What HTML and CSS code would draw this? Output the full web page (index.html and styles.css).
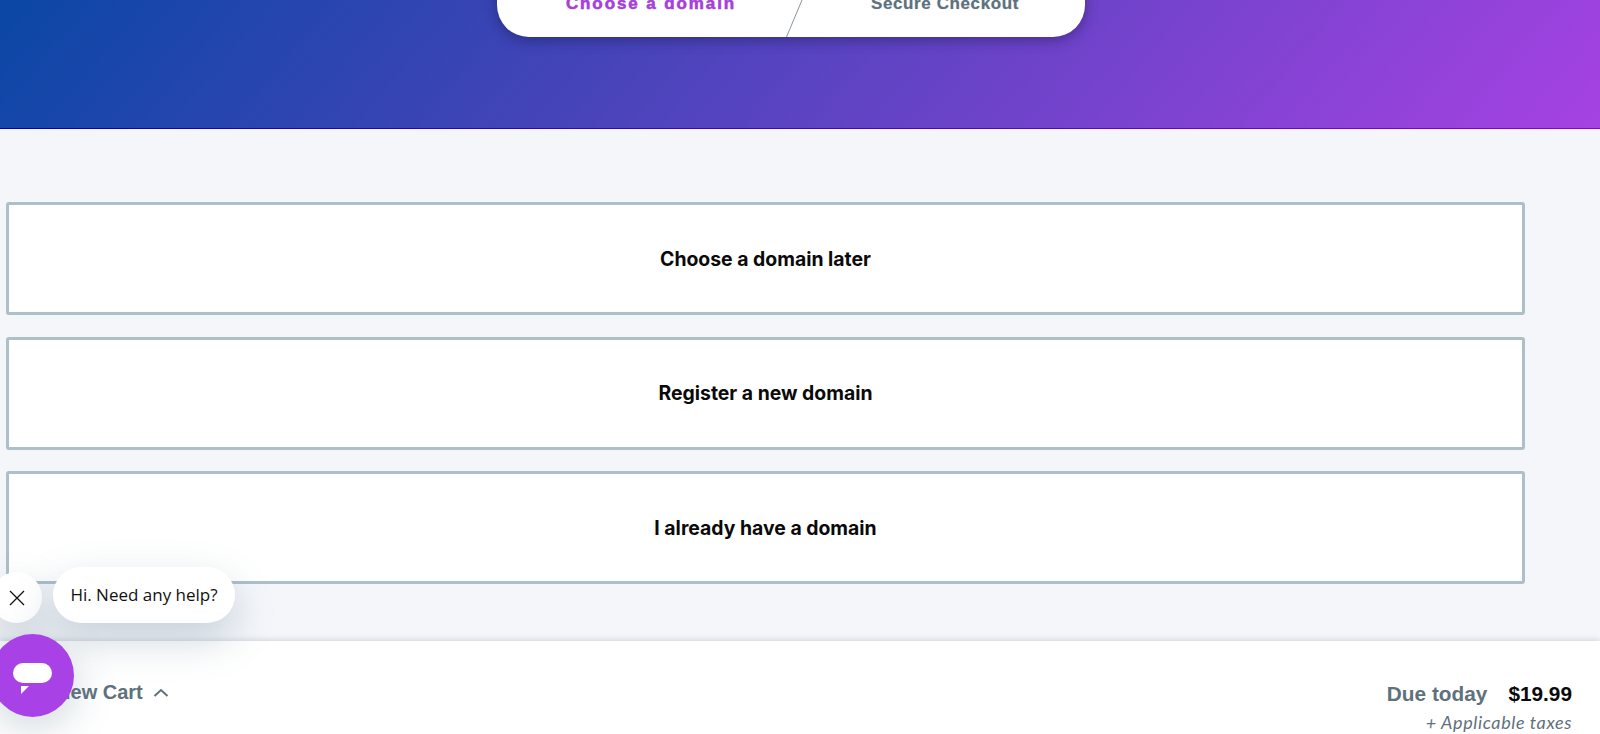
FILE: index.html

```html
<!DOCTYPE html>
<html lang="en">
<head>
  <meta charset="UTF-8" />
  <meta name="viewport" content="width=device-width, initial-scale=1.0"/>
  <title>Choose a domain</title>
  <link rel="stylesheet" href="styles.css">
</head>
<body>
  <header class="hero">
    <div class="steps">
      <div class="step step-active">Choose a domain</div>
      <div class="step">Secure Checkout</div>
      <svg class="step-arrow" width="18" height="42" viewBox="0 0 18 42">
        <path d="M13 0 L17 5 L1.500 42" fill="none" stroke="#8a949c" stroke-width="1"/>
      </svg>
    </div>
  </header>

  <main class="options">
    <button class="option">Choose a domain later</button>
    <button class="option">Register a new domain</button>
    <button class="option">I already have a domain</button>
  </main>

  <footer class="cart-bar">
    <div class="cart-toggle">
      <span>View Cart</span>
      <svg width="16" height="9" viewBox="0 0 16 9">
        <path d="M1.500 8 L8 2 L14.500 8" fill="none" stroke="#5f717d" stroke-width="2"/>
      </svg>
    </div>
    <div class="cart-total">
      <div class="due"><span class="due-label">Due today</span><span class="due-price">$19.99</span></div>
      <div class="taxes">+ Applicable taxes</div>
    </div>
  </footer>

  <div class="chat">
    <button class="chat-close">
      <svg width="16" height="16" viewBox="0 0 16 16">
        <path d="M1 1 L15 15 M15 1 L1 15" stroke="#111" stroke-width="1.300"/>
      </svg>
    </button>
    <div class="chat-bubble">Hi. Need any help?</div>
    <button class="chat-launcher">
      <svg width="40" height="32" viewBox="0 0 40 32">
        <rect x="0" y="0" width="39" height="20" rx="10" fill="#fff"/>
        <path d="M8 23 L16 23 L8 31 Z" fill="#fff"/>
      </svg>
    </button>
  </div>
</body>
</html>
```

FILE: styles.css

```css
html, body {
  height: 100%;
}
body {
  margin: 0;
  background-color: #f4f6fa;
  font-family: 'Liberation Sans', Arial, sans-serif;
  overflow: hidden;
  display: flex;
  flex-direction: column;
}
.hero {
  height: 128px;
  border-bottom: 1px solid;
  border-image: linear-gradient(90deg, #0000c0, #8800dd) 1;
  background: linear-gradient(130deg, #0a47a5 0%, #4444b8 37%, #a642e2 100%);
  display: flex;
  justify-content: center;
  flex-shrink: 0;
  overflow: hidden;
}
.steps {
  position: relative;
  width: 588px;
  height: 57px;
  margin-top: -20px;
  margin-left: -18px;
  display: flex;
  background: #fff;
  border-radius: 0 0 32px 32px;
  box-shadow: 0 3px 14px rgba(20, 20, 70, 0.45);
}
.step {
  flex: 1;
  display: flex;
  align-items: center;
  justify-content: center;
  padding: 0 0 10px 14px;
  font-size: 17px;
  font-weight: bold;
  letter-spacing: 0.6px;
  color: #5f717d;
  text-shadow: 0 0 1px rgba(95, 113, 125, 0.5);
}
.step-active {
  color: #a83de0;
  letter-spacing: 1.9px;
  -webkit-text-stroke: 0.4px #a83de0;
}
.step-arrow {
  position: absolute;
  left: 288px;
  bottom: 0;
}
.options {
  flex: 1;
  display: flex;
  flex-direction: column;
  gap: 21.700px;
  padding: 73px 0 0 6px;
}
.option {
  width: 1519px;
  height: 113px;
  background: #fff;
  border: 3px solid #adbfc9;
  border-radius: 3px;
  font-family: Inter, sans-serif;
  font-size: 19.400px;
  font-weight: 700;
  color: #0a0a0a;
  cursor: pointer;
}
.cart-bar {
  height: 93px;
  background: #fff;
  box-shadow: 0 -1px 6px rgba(90, 110, 125, 0.25);
  display: flex;
  justify-content: space-between;
  padding: 0 28px 0 52px;
  flex-shrink: 0;
}
.cart-toggle {
  display: flex;
  align-items: center;
  gap: 10px;
  height: 103px;
  font-size: 20px;
  font-weight: bold;
  color: #5f717d;
}
.cart-total {
  padding-top: 41px;
  text-align: right;
}
.due {
  display: flex;
  justify-content: flex-end;
  gap: 21px;
  font-size: 20.800px;
  font-weight: bold;
}
.due-label {
  color: #5f717d;
}
.due-price {
  color: #0a0a0a;
}
.taxes {
  margin-top: 5px;
  font-family: Lato, sans-serif;
  font-size: 18px;
  font-style: italic;
  letter-spacing: 0.6px;
  color: #5f717d;
}
.chat-close, .chat-bubble, .chat-launcher {
  position: absolute;
  background: #fff;
  border: 0;
}
.chat-close {
  left: -9px;
  top: 572px;
  width: 51px;
  height: 51px;
  border-radius: 50%;
  padding: 0 0 0 1px;
  box-shadow: 0 14px 36px rgba(90, 120, 135, 0.25);
  display: flex;
  align-items: center;
  justify-content: center;
}
.chat-bubble {
  left: 53px;
  top: 567px;
  width: 182px;
  height: 56px;
  border-radius: 28px;
  box-sizing: border-box;
  padding-bottom: 2px;
  display: flex;
  align-items: center;
  justify-content: center;
  font-family: 'Open Sans', sans-serif;
  font-size: 17px;
  color: #111;
  box-shadow: 0 16px 40px rgba(90, 120, 135, 0.3);
}
.chat-launcher {
  left: -9px;
  top: 634px;
  width: 83px;
  height: 83px;
  border-radius: 50%;
  background: #a842e6;
  padding: 0;
  box-shadow: 0 10px 40px rgba(90, 120, 135, 0.3);
  display: flex;
  align-items: center;
  justify-content: center;
}
.chat-launcher svg {
  margin-top: 6px;
}
```
